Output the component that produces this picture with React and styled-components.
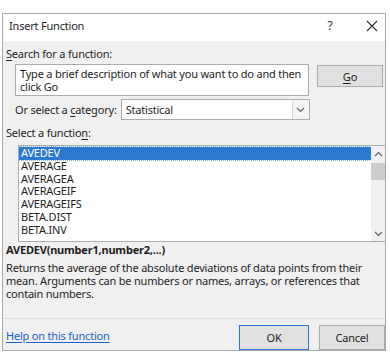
import React from 'react';
import styled, {createGlobalStyle} from 'styled-components';

const Global = createGlobalStyle`
  html, body {
    margin: 0;
    background: #ffffff;
  }
  body {
    font-family: "Noto Sans", "Open Sans", sans-serif;
    font-size: 11px;
    letter-spacing: -0.2px;
    color: #1e1e1e;
  }
`;

const Dialog = styled.div`
  margin: 13px 0 0 2px;
  width: 382px;
  height: 336px;
  border: 1px solid #a8a8a8;
  background: #f0f0f0;
  display: flex;
  flex-direction: column;
  overflow: hidden;
`;

const TitleBar = styled.div`
  height: 27px;
  box-sizing: border-box;
  background: #ffffff;
  display: flex;
  align-items: flex-start;
  padding: 3px 0 0 6px;
  line-height: 17px;
`;

const Title = styled.div`
  flex: 1;
`;

const TitleButton = styled.div`
  width: ${p => p.$w}px;
  margin-left: ${p => p.$gap || 0}px;
  height: 17px;
  display: flex;
  justify-content: center;
  align-items: center;
  color: #333;
  font-size: 12px;
`;

const Body = styled.div`
  flex: 1;
  display: flex;
  flex-direction: column;
  padding: 3px 0 0 3px;
`;

const Label = styled.div`
  height: 17px;
  line-height: 17px;
  margin-top: ${p => p.$top || 0}px;
`;

const Key = styled.span`
  text-decoration: underline;
  text-underline-offset: 2px;
`;

const SearchRow = styled.div`
  display: flex;
  align-items: flex-start;
  margin-top: 2px;
  padding-left: 9px;
`;

const SearchBox = styled.div`
  width: 288px;
  height: 28px;
  background: #ffffff;
  border: 1px solid #acacac;
  padding: 2px 0 0 4px;
  line-height: 13px;
`;

const Button = styled.div`
  width: ${p => p.$w || 66}px;
  height: ${p => p.$h || 22}px;
  box-sizing: border-box;
  border: 1px solid ${p => (p.$primary ? '#2a78d0' : '#adadad')};
  background: #e1e1e1;
  display: flex;
  align-items: center;
  justify-content: center;
  margin-left: ${p => p.$gap || 0}px;
  margin-top: ${p => p.$top || 0}px;
`;

const CategoryRow = styled.div`
  display: flex;
  align-items: center;
  padding-left: 9px;
  margin-top: 3px;
  height: 21px;
`;

const Select = styled.div`
  margin-left: 4px;
  width: 189px;
  height: 21px;
  box-sizing: border-box;
  background: #ffffff;
  border: 1px solid #acacac;
  display: flex;
  align-items: center;
`;

const SelectValue = styled.div`
  flex: 1;
  padding-left: 4px;
`;

const SelectArrow = styled.div`
  width: 16px;
  height: 19px;
  background: #f4f4f4;
  border-left: 1px solid #dcdcdc;
  display: flex;
  align-items: center;
  justify-content: center;
`;

const ListBox = styled.div`
  margin: 4px 0 0 12px;
  width: 368px;
  height: 97px;
  box-sizing: border-box;
  background: #ffffff;
  border: 1px solid #acacac;
  display: flex;
`;

const Items = styled.div`
  flex: 1;
  padding-top: 1px;
`;

const Item = styled.div`
  height: 12.8px;
  line-height: 12.8px;
  padding-left: 2px;
  background: ${p => (p.$selected ? '#2a78d0' : 'transparent')};
  color: ${p => (p.$selected ? '#ffffff' : '#1e1e1e')};
  outline: ${p => (p.$selected ? '1px dotted #8fb4e3' : 'none')};
`;

const ScrollBar = styled.div`
  width: 14px;
  background: #f0f0f0;
  display: flex;
  flex-direction: column;
  align-items: center;
`;

const ScrollArrow = styled.div`
  height: 15px;
  display: flex;
  align-items: center;
  justify-content: center;
`;

const ScrollTrack = styled.div`
  flex: 1;
  width: 100%;
`;

const Thumb = styled.div`
  height: 17px;
  margin-top: 2px;
  background: #cdcdcd;
`;

const Signature = styled.div`
  font-weight: bold;
  height: 14px;
  line-height: 14px;
  margin-top: 1px;
`;

const Description = styled.div`
  line-height: 13px;
  margin-top: 4px;
  width: 372px;
`;

const Footer = styled.div`
  margin-top: auto;
  border-top: 1px solid #dcdcdc;
  margin-left: -3px;
  padding: 6px 0 0 3px;
  height: 25px;
  display: flex;
  align-items: flex-start;
`;

const HelpLink = styled.a`
  color: #1b63c6;
  text-decoration: underline;
  text-underline-offset: 2px;
  flex: 1;
  line-height: 15px;
  margin-top: 3px;
`;

const Chevron = ({up}) => (
  <svg width="9" height="6" viewBox="0 0 9 6">
    <path d={up ? 'M1 5 L4.5 1.5 L8 5' : 'M1 1 L4.5 4.5 L8 1'} fill="none" stroke="#606060" strokeWidth="1.2"/>
  </svg>
);

const items = ['AVEDEV', 'AVERAGE', 'AVERAGEA', 'AVERAGEIF', 'AVERAGEIFS', 'BETA.DIST', 'BETA.INV'];

export default function App() {
  return (
    <>
      <Global/>
      <Dialog>
        <TitleBar>
          <Title>Insert Function</Title>
          <TitleButton $w={40}>?</TitleButton>
          <TitleButton $w={26} $gap={9}>
            <svg width="12" height="12" viewBox="0 0 12 12">
              <path d="M1 1 L11 11 M11 1 L1 11" stroke="#333" strokeWidth="1.1"/>
            </svg>
          </TitleButton>
        </TitleBar>
        <Body>
          <Label $top={1}><Key>S</Key>earch for a function:</Label>
          <SearchRow>
            <SearchBox>Type a brief description of what you want to do and then click Go</SearchBox>
            <Button $gap={8} $w={66} $h={22} $top={1}><span><Key>G</Key>o</span></Button>
          </SearchRow>
          <CategoryRow>
            <span>Or select a <Key>c</Key>ategory:</span>
            <Select>
              <SelectValue>Statistical</SelectValue>
              <SelectArrow><Chevron/></SelectArrow>
            </Select>
          </CategoryRow>
          <Label $top={4}>Select a functio<Key>n</Key>:</Label>
          <ListBox>
            <Items>
              {items.map((name, i) => (
                <Item key={name} $selected={i === 0}>{name}</Item>
              ))}
            </Items>
            <ScrollBar>
              <ScrollArrow><Chevron up/></ScrollArrow>
              <ScrollTrack><Thumb/></ScrollTrack>
              <ScrollArrow><Chevron/></ScrollArrow>
            </ScrollBar>
          </ListBox>
          <Signature>AVEDEV(number1,number2,...)</Signature>
          <Description>
            Returns the average of the absolute deviations of data points from their mean. Arguments can be numbers or names, arrays, or references that contain numbers.
          </Description>
          <Footer>
            <HelpLink>Help on this function</HelpLink>
            <Button $primary $w={70} $h={25}>OK</Button>
            <Button $gap={10} $w={66} $h={25}>Cancel</Button>
          </Footer>
        </Body>
      </Dialog>
    </>
  );
}
